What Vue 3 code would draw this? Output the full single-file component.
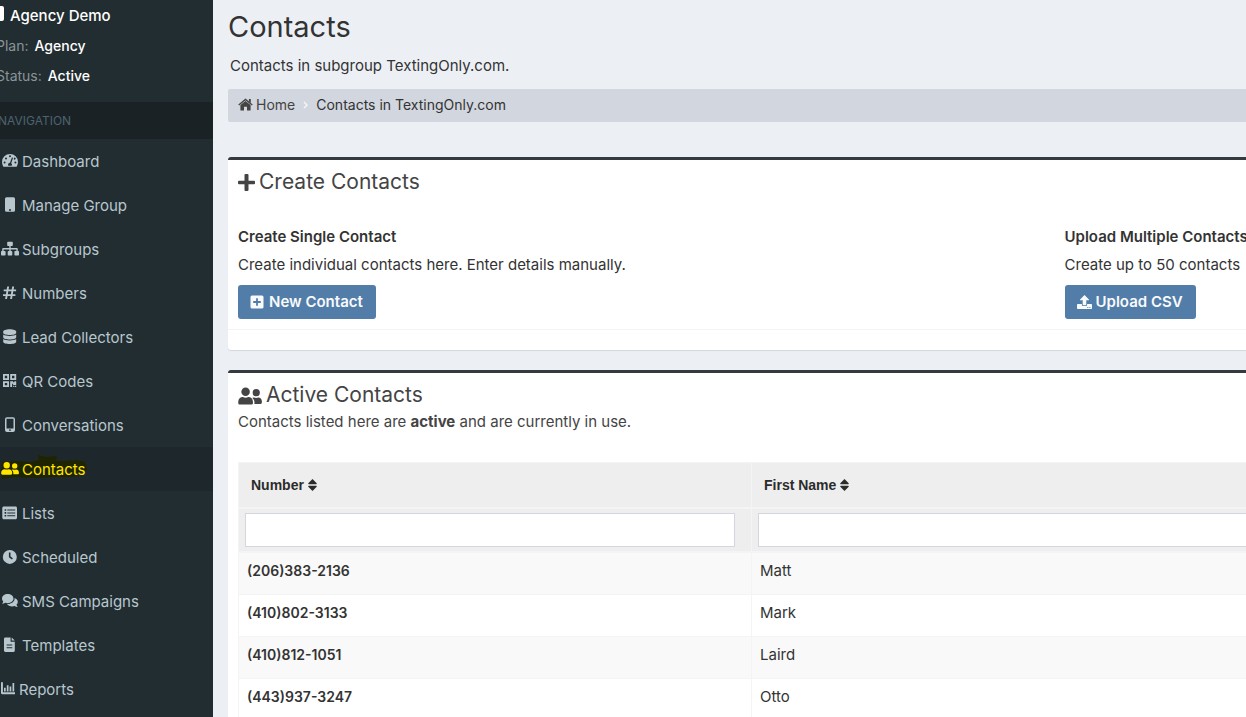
<script setup>
import { ref } from 'vue'

const nav = [
  { label: 'Dashboard', icon: 'gauge' },
  { label: 'Manage Group', icon: 'phoneSolid' },
  { label: 'Subgroups', icon: 'sitemap' },
  { label: 'Numbers', icon: 'hash' },
  { label: 'Lead Collectors', icon: 'database' },
  { label: 'QR Codes', icon: 'qr' },
  { label: 'Conversations', icon: 'phone' },
  { label: 'Contacts', icon: 'users', active: true },
  { label: 'Lists', icon: 'list' },
  { label: 'Scheduled', icon: 'clock' },
  { label: 'SMS Campaigns', icon: 'comments' },
  { label: 'Templates', icon: 'file' },
  { label: 'Reports', icon: 'chart', narrow: true },
]

// Icon shapes on a 20 x 16 grid
const icons = {
  gauge: 'M10 1a8 8 0 0 0-8 8c0 1.6.45 3.1 1.2 4.4.15.25.4.4.7.4h12.2c.3 0 .55-.15.7-.4A8.6 8.6 0 0 0 18 9a8 8 0 0 0-8-8zM10 2.3a1 1 0 1 1 0 2 1 1 0 0 1 0-2zM4.6 10.6a1 1 0 1 1 0-2 1 1 0 0 1 0 2zM6 6.6a1 1 0 1 1 0-2 1 1 0 0 1 0 2zM12.9 5.3l-1.7 4.9c.5.35.8.9.8 1.5 0 .35-.1.7-.3 1H8.3a2 2 0 0 1 1.7-3l1.7-4.8c.3-.8 1.5-.4 1.2.4zM13.7 5.9l.4-1.1a1 1 0 1 1-.4 1.1zM15.4 10.6a1 1 0 1 1 0-2 1 1 0 0 1 0 2z',
  phoneSolid: 'M6.5.2h7A1.5 1.5 0 0 1 15 1.7v11.6a1.5 1.5 0 0 1-1.500 1.500h-7A1.5 1.5 0 0 1 5 13.300V1.700A1.5 1.5 0 0 1 6.500.2zM10 12a1 1 0 1 0 0 2 1 1 0 0 0 0-2z',
  sitemap: 'M8 .8h4a.8.8 0 0 1 .8.8V4.200a.8.8 0 0 1-.8.8h-1.300v2h5.800c.8 0 1.300.5 1.300 1.300v1.700h.4a.8.8 0 0 1 .8.8v3a.8.8 0 0 1-.8.8h-3a.8.8 0 0 1-.8-.8v-3a.8.8 0 0 1 .8-.8h1.200V8.400h-5.700v1.600h.8a.8.8 0 0 1 .8.8v3a.8.8 0 0 1-.8.8h-3a.8.8 0 0 1-.8-.8v-3a.8.8 0 0 1 .8-.8h.8V8.400H3.600v1.600h1.200a.8.8 0 0 1 .8.8v3a.8.8 0 0 1-.8.8h-3a.8.8 0 0 1-.8-.8v-3a.8.8 0 0 1 .8-.8h.4V8.300C2.200 7.500 2.700 7 3.500 7h5.800V5H8a.8.8 0 0 1-.8-.8V1.600A.8.8 0 0 1 8 .8z',
  hash: 'M7.200 1.500h1.900l-.5 2.900h3.100l.5-2.900h1.900l-.5 2.900h2.500v1.800h-2.800l-.5 3.100h2.600v1.800h-2.900l-.5 2.900h-1.900l.5-2.900H7.500l-.5 2.900H5.100l.5-2.900H3V9.300h2.900l.5-3.100H3.700V4.400h3zM8.300 6.200l-.5 3.100h3.100l.5-3.100z',
  database: 'M9.700.3c3.700 0 6.500 1 6.500 2.300v1.100c0 1.300-2.800 2.300-6.500 2.300s-6.500-1-6.500-2.300V2.600C3.200 1.300 6 .3 9.700.3zM16.200 5.600v2.600c0 1.300-2.800 2.300-6.500 2.300s-6.500-1-6.500-2.300V5.600c1.400 1 3.900 1.400 6.500 1.400s5.100-.4 6.500-1.400zM16.200 10.100v2.700c0 1.300-2.800 2.300-6.500 2.300s-6.500-1-6.500-2.300v-2.700c1.400 1 3.900 1.400 6.500 1.400s5.100-.4 6.500-1.400z',
  qr: 'M3 1h6v6H3zM4.800 2.800v2.400h2.400V2.800zM10.200 1h6v6h-6zM12 2.800v2.400h2.400V2.800zM3 8.200h6v5.900H3zM4.800 10v2.300h2.400V10zM10.200 8.200h2.900v1h1.300v-1h1.800v3.700h-3.100v-1.100h-1v3.300h-1.900zM13.200 12.800h1.200v1.300h-1.200zM15 12.800h1.200v1.300H15z',
  phone: 'M7 .2h6A2 2 0 0 1 15 2.200v10.700a2 2 0 0 1-2 2H7a2 2 0 0 1-2-2V2.200A2 2 0 0 1 7 .2zM6.500 1.800v9.700h7V1.800zM10 12.200a.9.900 0 1 0 0 1.800.9.900 0 0 0 0-1.800z',
  users: 'M6.700 1a3.200 3.200 0 1 1 0 6.400 3.200 3.200 0 0 1 0-6.400zM4.700 8.200c.6.300 1.300.4 2 .4s1.400-.1 2-.4c2 0 3.500 1.500 3.500 3.400v1c0 .7-.5 1.200-1.200 1.200H2.400c-.7 0-1.200-.5-1.200-1.200v-1c0-1.900 1.500-3.400 3.500-3.400zM14.700 2.200a2.700 2.700 0 1 1 0 5.400 2.700 2.700 0 0 1 0-5.400zM13 8.500c1.100.4 2.100.4 3.200 0 1.500 0 2.700 1.200 2.700 2.700v1.100c0 .6-.4 1-1 1h-4.600c.2-1.900-.1-3.400-1.600-4.400.4-.300.8-.4 1.300-.4z',
  list: 'M3.800 1.500h11.700c.8 0 1.500.7 1.500 1.500v9.800c0 .8-.7 1.500-1.500 1.500H3.800c-.8 0-1.500-.7-1.500-1.500V3c0-.8.7-1.500 1.500-1.500zM4.600 4.200v1.600h1.600V4.200zM7.300 4.500v1h7.900v-1zM4.600 7.100v1.600h1.600V7.100zM7.300 7.400v1h7.900v-1zM4.600 10v1.600h1.600V10zM7.300 10.300v1h7.900v-1z',
  clock: 'M9.800.9a7 7 0 1 1 0 14 7 7 0 0 1 0-14zM8.900 3.600v4.700l3 2.300 1-1.400-2.400-1.700V3.600z',
  comments: 'M7.700 1c3.200 0 5.800 2 5.800 4.600s-2.600 4.600-5.800 4.600c-.9 0-1.700-.2-2.500-.4-.9.600-1.900.9-3.100.9.600-.7 1-1.500 1.200-2.100C2.500 7.800 2 6.800 2 5.600 2 3 4.500 1 7.700 1zM14.600 5c1.900.7 3.200 2.100 3.200 3.800 0 1.200-.5 2.200-1.300 3 .2.600.6 1.400 1.200 2.100-1.200 0-2.200-.3-3.100-.9-.8.200-1.600.4-2.500.4-2.200 0-4.100-1-5.100-2.400.3.100.5.100.7.100 3.800 0 6.900-2.400 6.900-5.500z',
  file: 'M5.300.5h5.300v4.200h4.200v8.900c0 .7-.5 1.300-1.200 1.300H5.300C4.600 14.900 4 14.300 4 13.600V1.800C4 1.100 4.600.5 5.300.5zM11.700.5l3.100 3.100h-3.100zM6.600 7.600v1h5.700v-1zM6.600 10.300v1h5.700v-1z',
  chart: 'M1 1.200h1.900V11.300H15v1.900H2.200c-.7 0-1.200-.5-1.200-1.200zM4 6.700h1.700v3.700H4zM6.800 4.200h1.700v6.200H6.800zM9.600 5.500h1.700v4.900H9.600zM12.500 1.900h1.700v8.500h-1.700z',
}

const contacts = [
  { number: '(206)383-2136', first: 'Matt' },
  { number: '(410)802-3133', first: 'Mark' },
  { number: '(410)812-1051', first: 'Laird' },
  { number: '(443)937-3247', first: 'Otto' },
]

const numberFilter = ref('')
const firstFilter = ref('')
</script>

<template>
  <div class="shell">
    <aside class="sidebar">
      <div class="account">
        <div class="account-name"><span class="badge-mark"></span>Agency Demo</div>
        <div class="account-line"><span>Plan:</span><strong>Agency</strong></div>
        <div class="account-line"><span>Status:</span><strong>Active</strong></div>
      </div>
      <div class="nav-title">NAVIGATION</div>
      <nav>
        <a
          v-for="item in nav"
          :key="item.label"
          href="#"
          class="nav-item"
          :class="{ active: item.active, narrow: item.narrow }"
        >
          <svg v-if="item.active" class="marker" viewBox="0 0 90 24" aria-hidden="true">
            <path d="M2 7l17-1 12 1 8-2-1-5 8 2 11-1-1 5 10 0 11-1 8 2 2 7-4 5-11 3-18 0-16 1-24-1-12 2-1-6z" />
          </svg>
          <svg class="icon" viewBox="0 0 20 16" aria-hidden="true">
            <path fill-rule="evenodd" :d="icons[item.icon]" />
          </svg>
          <span>{{ item.label }}</span>
        </a>
      </nav>
    </aside>

    <main class="content">
      <h1>Contacts</h1>
      <p class="subtitle">Contacts in subgroup TextingOnly.com.</p>
      <nav class="breadcrumb" aria-label="Breadcrumb">
        <a href="#">
          <svg class="home" viewBox="0 0 15 13" aria-hidden="true">
            <path d="M7.500 2.900l5.100 4.200v4.800c0 .4-.3.700-.7.700H9V8.800H6v3.800H3.100c-.4 0-.7-.3-.7-.7V7.100z" />
            <path d="M.7 7.100l6.800-5.700 6.800 5.700" fill="none" stroke="currentColor" stroke-width="1.300" />
            <path d="M10.900.9h1.900v4.200l-1.900-1.600z" />
          </svg>
          Home
        </a>
        <svg class="chevron" viewBox="0 0 5 8" aria-hidden="true"><path d="M1 1l3 3-3 3" /></svg>
        <span>Contacts in TextingOnly.com</span>
      </nav>

      <section class="card">
        <h2>
          <svg class="plus" viewBox="0 0 17 17" aria-hidden="true">
            <path d="M7.500 0h2a1 1 0 0 1 1 1v5.700H16a1 1 0 0 1 1 1v1.600a1 1 0 0 1-1 1h-5.500V16a1 1 0 0 1-1 1h-2a1 1 0 0 1-1-1v-5.700H1a1 1 0 0 1-1-1V7.700a1 1 0 0 1 1-1h5.500V1a1 1 0 0 1 1-1z" />
          </svg>
          Create Contacts
        </h2>
        <div class="options">
          <div class="option">
            <h3>Create Single Contact</h3>
            <p>Create individual contacts here. Enter details manually.</p>
            <button type="button">
              <svg viewBox="0 0 15 14" aria-hidden="true">
                <path fill-rule="evenodd" d="M2 .5h10a1.500 1.500 0 0 1 1.500 1.500v10a1.500 1.500 0 0 1-1.500 1.500H2A1.500 1.500 0 0 1 .5 12V2A1.500 1.500 0 0 1 2 .5zM6.100 3.200v2.900H3.200v1.800h2.900v2.900h1.800V7.900h2.900V6.100H7.900V3.200z" />
              </svg>
              New Contact
            </button>
          </div>
          <div class="option">
            <h3>Upload Multiple Contacts</h3>
            <p>Create up to 50 contacts</p>
            <button type="button">
              <svg viewBox="0 0 15 14" aria-hidden="true">
                <path fill-rule="evenodd" d="M7.500 0l4.400 4.600c.3.300.1.700-.3.700H9.300v4.200c0 .4-.3.700-.7.700H6.400c-.4 0-.7-.3-.7-.7V5.300H3.400c-.4 0-.6-.4-.3-.7zM.7 9h4.200v.8c0 .7.600 1.300 1.300 1.300h2.600c.7 0 1.300-.6 1.300-1.300V9h4.200c.4 0 .7.300.7.700v3.600c0 .4-.3.700-.7.700H.7c-.4 0-.7-.3-.7-.7V9.700C0 9.300.3 9 .7 9zM10.300 12v1h1v-1zM12.400 12v1h1v-1z" />
              </svg>
              Upload CSV
            </button>
          </div>
        </div>
        <div class="card-footer"></div>
      </section>

      <section class="card">
        <h2>
          <svg class="people" viewBox="1 0 18 14" aria-hidden="true"><path :d="icons.users" /></svg>
          Active Contacts
        </h2>
        <p class="note">Contacts listed here are <b>active</b> and are currently in use.</p>
        <div class="table-wrap">
          <table>
            <thead>
              <tr class="labels">
                <th v-for="name in ['Number', 'First Name']" :key="name" scope="col">
                  {{ name }}
                  <svg class="sort" viewBox="0 0 9 12" aria-hidden="true">
                    <path d="M4.500 0L8.700 4.300q.3.900-.5.900H.8q-.8 0-.5-.9zM4.500 12L.3 7.700q-.3-.9.500-.9h7.400q.8 0 .5.900z" />
                  </svg>
                </th>
              </tr>
              <tr class="filters">
                <td><input v-model="numberFilter" type="text" aria-label="Filter by number" /></td>
                <td><input v-model="firstFilter" type="text" aria-label="Filter by first name" /></td>
              </tr>
            </thead>
            <tbody>
              <tr v-for="row in contacts" :key="row.number">
                <td class="number">{{ row.number }}</td>
                <td>{{ row.first }}</td>
              </tr>
            </tbody>
          </table>
        </div>
      </section>
    </main>
  </div>
</template>

<style>
html,
body {
  height: 100%;
  overflow: hidden;
}
body {
  margin: 0;
  background: #ecf0f5;
}
#app {
  height: 100%;
}
</style>

<style scoped>
.shell {
  display: flex;
  height: 100%;
  overflow: hidden;
  font-family: Inter, "Open Sans", sans-serif;
  font-size: 14px;
  line-height: 20px;
  color: #333;
}
.shell * {
  box-sizing: border-box;
}
svg {
  fill: currentColor;
  flex: none;
}
h1, h2, h3, p {
  margin: 0;
}

.sidebar {
  width: 213px;
  flex: none;
  overflow: hidden;
  background: #222d32;
  color: #b8c7ce;
}
.account {
  height: 102px;
  padding-top: 6px;
}
.account-name,
.account-line {
  display: flex;
  height: 20px;
  margin-bottom: 10px;
  color: #fff;
  font-weight: 500;
}
.account-name {
  font-size: 15px;
}
.badge-mark {
  width: 4px;
  height: 15px;
  margin-right: 6px;
  border-radius: 0 2px 2px 0;
  background: #fff;
}
.account-line {
  gap: 6px;
  margin-left: -4px;
}
.account-line span {
  color: #8b9498;
  font-weight: 400;
}
.account-line strong {
  font-weight: 500;
}
.nav-title {
  height: 37px;
  margin-left: -2px;
  background: #1a2226;
  color: #4b646f;
  font-size: 12px;
  line-height: 38px;
}
.nav-item {
  position: relative;
  display: flex;
  align-items: center;
  gap: 2px;
  height: 44px;
  color: #b8c7ce;
  font-size: 15px;
  text-decoration: none;
}
.nav-item .icon,
.nav-item span {
  position: relative;
}
.nav-item span {
  padding-top: 2px;
}
.nav-item.active {
  background: #1e282c;
  color: #ffe600;
}
.nav-item.narrow .icon {
  margin-right: -3px;
}
.icon {
  width: 20px;
  height: 16px;
}
.marker {
  position: absolute;
  top: 8px;
  left: 0;
  width: 90px;
  height: 24px;
  color: #1f2400;
}

.content {
  flex: 1;
  min-width: 0;
  padding: 8px 0 0 15px;
  overflow: hidden;
}
h1 {
  font-size: 29px;
  font-weight: 400;
  line-height: 38px;
}
.subtitle {
  margin: 10px 0 13px 2px;
  font-size: 15px;
}
.breadcrumb {
  display: flex;
  align-items: center;
  gap: 8px;
  height: 33px;
  margin-bottom: 35px;
  padding: 0 0 2px 10px;
  border-radius: 2px 0 0 2px;
  background: #d2d6de;
}
.breadcrumb a {
  display: flex;
  align-items: center;
  gap: 3px;
  color: #444;
  text-decoration: none;
}
.home {
  width: 15px;
  height: 13px;
}
.chevron {
  width: 5px;
  height: 8px;
  fill: none;
  stroke: #f4f5f8;
  stroke-width: 1.500;
}

.card {
  margin-bottom: 20px;
  padding: 10px 0 0 10px;
  overflow: hidden;
  border-top: 3px solid #343a40;
  border-radius: 3px 0 0 3px;
  background: #fff;
  box-shadow: 0 1px 1px rgba(0, 0, 0, 0.1);
}
h2 {
  display: flex;
  align-items: center;
  gap: 4px;
  color: #444;
  font-size: 21px;
  font-weight: 400;
  line-height: 24px;
}
.plus {
  width: 17px;
  height: 17px;
}
.people {
  width: 24px;
  height: 19px;
}
.options {
  display: grid;
  grid-template-columns: 1fr 1fr;
  width: 164%;
  padding: 33px 0 10px;
}
h3 {
  font-size: 15px;
  font-weight: 600;
  line-height: 20px;
}
.option p {
  margin: 8px 0 10px;
  font-size: 15px;
}
button {
  display: flex;
  align-items: center;
  gap: 4px;
  height: 34px;
  padding: 0 13px 0 12px;
  border: 0;
  border-radius: 3px;
  background: #527da9;
  color: #f8fafc;
  font: 600 15px/20px Inter, "Open Sans", sans-serif;
}
button svg {
  width: 15px;
  height: 14px;
}
.card-footer {
  height: 21px;
  margin-left: -10px;
  border-top: 1px solid #f4f4f4;
}
.note {
  margin: 5px 0 30px;
  color: #444;
  font-size: 15px;
}
.table-wrap {
  overflow: hidden;
}
table {
  width: calc(100% + 18px);
  table-layout: fixed;
  border-collapse: separate;
  border-spacing: 0;
}
th, td {
  border-left: 1px solid #f4f4f4;
}
thead {
  background: #eee;
}
.labels th {
  height: 47px;
  padding: 0 12px;
  border-top: 1px solid #f4f4f4;
  border-bottom: 2px solid #f4f4f4;
  color: #2b2b2b;
  font: bold 14px/20px "Liberation Sans", Arial, sans-serif;
  text-align: left;
}
.sort {
  width: 9px;
  height: 12px;
  vertical-align: -1px;
}
.filters td {
  padding: 4px 16px 4px 6px;
  border-bottom: 2px solid #f4f4f4;
}
input {
  display: block;
  width: 100%;
  height: 34px;
  padding: 6px 12px;
  border: 1px solid #d2d6de;
  border-radius: 0;
  background: #fff;
  font: 14px/20px Inter, sans-serif;
}
tbody td {
  height: 42px;
  padding: 0 8px 6px;
  border-bottom: 1px solid #f4f4f4;
  font-size: 15px;
}
tbody tr:nth-child(odd) {
  background: #f9f9f9;
}
tbody .number {
  font-size: 14px;
  font-weight: 600;
}
</style>
